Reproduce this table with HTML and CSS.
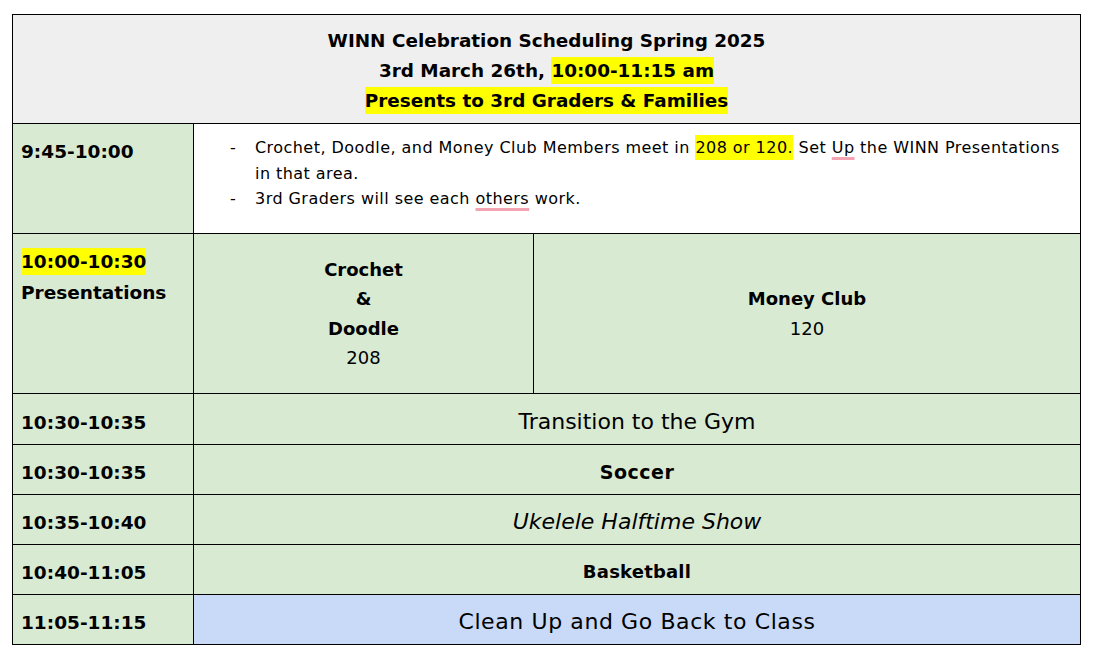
FILE: index.html
```html
<!DOCTYPE html>
<html>
<head>
<meta charset="utf-8">
<link rel="stylesheet" href="styles.css">
</head>
<body>
<div class="sheet">
  <div class="cell head span3">
    <div>WINN Celebration Scheduling Spring 2025</div>
    <div>3rd March 26th, <span class="hl">10:00-11:15 am</span></div>
    <div><span class="hl">Presents to 3rd Graders &amp; Families</span></div>
  </div>

  <div class="cell time top">9:45-10:00</div>
  <div class="cell notes span2">
    <ul class="dash">
      <li>Crochet, Doodle, and Money Club Members meet in <span class="hl">208 or 120.</span> Set <span class="spell">Up</span> the WINN Presentations in that area.</li>
      <li>3rd Graders will see each <span class="spell">others</span> work.</li>
    </ul>
  </div>

  <div class="cell time top"><span class="hl">10:00-10:30</span><br>Presentations</div>
  <div class="cell group"><b>Crochet</b><b>&amp;</b><b>Doodle</b><span>208</span></div>
  <div class="cell group"><b>Money Club</b><span>120</span></div>

  <div class="cell time">10:30-10:35</div>
  <div class="cell span2 event big">Transition to the Gym</div>

  <div class="cell time">10:30-10:35</div>
  <div class="cell span2 event strong">Soccer</div>

  <div class="cell time">10:35-10:40</div>
  <div class="cell span2 event big italic">Ukelele Halftime Show</div>

  <div class="cell time">10:40-11:05</div>
  <div class="cell span2 event strong small">Basketball</div>

  <div class="cell time">11:05-11:15</div>
  <div class="cell span2 event big wide blue">Clean Up and Go Back to Class</div>
</div>
</body>
</html>
```

FILE: styles.css
```css
* { box-sizing: border-box; }

body {
  margin: 0;
  padding: 14px 0 0 12px;
  background: #ffffff;
  font-family: "DejaVu Sans", "Open Sans", sans-serif;
  color: #000000;
}

.sheet {
  display: grid;
  grid-template-columns: 180px 339px 546px;
  grid-template-rows: 108px 109px 159px 50px 49px 49px 49px 49px;
  gap: 1px;
  background: #000000;
  border: 1px solid #000000;
  width: 1069px;
}

.cell {
  background: #d9ead3;
}

.span3 { grid-column: span 3; }
.span2 { grid-column: span 2; }

.head {
  background: #efefef;
  text-align: center;
  font-weight: 700;
  font-size: 18.4px;
  line-height: 30px;
  padding-top: 11px;
}

.hl {
  background: #ffff00;
  padding: 3px 0;
}

.time {
  font-weight: 700;
  font-size: 18.5px;
  line-height: 31px;
  padding: 6px 8px 0;
  display: flex;
  align-items: center;
}

.time.top {
  display: block;
  padding-top: 12px;
}

.notes {
  background: #ffffff;
  font-size: 16px;
  letter-spacing: 0.45px;
  line-height: 25.5px;
  padding: 11px 4px 0 0;
}

.dash {
  margin: 0;
  padding: 0 0 0 61px;
  list-style: none;
}

.dash li {
  position: relative;
}

.dash li::before {
  content: "-";
  position: absolute;
  left: -25px;
}

.spell {
  text-decoration: underline;
  text-decoration-color: #f4a3b3;
  text-decoration-thickness: 3px;
  text-underline-offset: 4px;
}

.group {
  display: flex;
  flex-direction: column;
  align-items: center;
  justify-content: center;
  font-size: 18px;
  line-height: 29.5px;
}

.group b { font-weight: 700; }

.event {
  display: flex;
  align-items: center;
  justify-content: center;
  padding-top: 4px;
}

.big { font-size: 22px; }
.wide { letter-spacing: 0.6px; }
.strong { font-weight: 700; font-size: 19px; letter-spacing: 0.5px; }
.strong.small { font-size: 18px; letter-spacing: 0.2px; }
.italic { font-style: italic; }
.blue { background: #c9daf8; }
```
